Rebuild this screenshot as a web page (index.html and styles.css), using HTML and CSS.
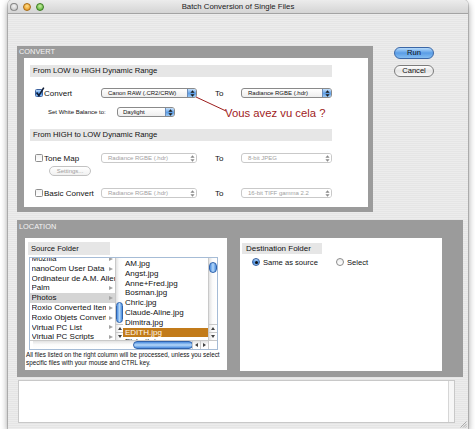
FILE: index.html
```html
<!DOCTYPE html>
<html>
<head>
<meta charset="utf-8">
<title>Batch Conversion of Single Files</title>
<link rel="stylesheet" href="styles.css">
</head>
<body>
<div class="window">
  <div class="titlebar">
    <div class="lights"><span class="light close"></span><span class="light minimize"></span><span class="light zoom"></span></div>
    <div class="title">Batch Conversion of Single Files</div>
    <div></div>
  </div>
  <div class="content">
    <div class="top-row">
      <section class="panel convert">
        <div class="panel-head">CONVERT</div>
        <div class="panel-body">
          <div class="band">From LOW to HIGH Dynamic Range</div>
          <div class="row r-convert">
            <label class="check"><span class="box checked"><svg width="10" height="11" viewBox="0 0 10 11"><path d="M1.6 5.6 L3.9 8.6 L8.8 0.6" fill="none" stroke="#0d1a33" stroke-width="1.6"/></svg></span>Convert</label>
            <div class="popup"><span>Canon RAW (.CR2/CRW)</span><span class="cap"><svg width="5" height="7" viewBox="0 0 5 7"><path d="M2.5 0.3 L4.6 2.8 H0.4Z M2.5 6.7 L4.6 4.2 H0.4Z" fill="#1a1a1a"/></svg></span></div>
            <span class="to">To</span>
            <div class="popup right"><span>Radiance RGBE (.hdr)</span><span class="cap"><svg width="5" height="7" viewBox="0 0 5 7"><path d="M2.5 0.3 L4.6 2.8 H0.4Z M2.5 6.7 L4.6 4.2 H0.4Z" fill="#1a1a1a"/></svg></span></div>
          </div>
          <div class="row r-wb">
            <span class="wb-label">Set White Balance to:</span>
            <div class="popup wb"><span>Daylight</span><span class="cap"><svg width="5" height="7" viewBox="0 0 5 7"><path d="M2.5 0.3 L4.6 2.8 H0.4Z M2.5 6.7 L4.6 4.2 H0.4Z" fill="#1a1a1a"/></svg></span></div>
          </div>
          <div class="band band2">From HIGH to LOW Dynamic Range</div>
          <div class="row r-tone">
            <label class="check"><span class="box"></span>Tone Map</label>
            <div class="popup off"><span>Radiance RGBE (.hdr)</span><span class="cap"><svg width="5" height="7" viewBox="0 0 5 7"><path d="M2.5 0.3 L4.6 2.8 H0.4Z M2.5 6.7 L4.6 4.2 H0.4Z" fill="#8a8a8a"/></svg></span></div>
            <span class="to">To</span>
            <div class="popup right off"><span>8-bit JPEG</span><span class="cap"><svg width="5" height="7" viewBox="0 0 5 7"><path d="M2.5 0.3 L4.6 2.8 H0.4Z M2.5 6.7 L4.6 4.2 H0.4Z" fill="#8a8a8a"/></svg></span></div>
          </div>
          <div class="row r-settings"><span class="btn-small">Settings...</span></div>
          <div class="row r-basic">
            <label class="check"><span class="box"></span>Basic Convert</label>
            <div class="popup off"><span>Radiance RGBE (.hdr)</span><span class="cap"><svg width="5" height="7" viewBox="0 0 5 7"><path d="M2.5 0.3 L4.6 2.8 H0.4Z M2.5 6.7 L4.6 4.2 H0.4Z" fill="#8a8a8a"/></svg></span></div>
            <span class="to">To</span>
            <div class="popup right off"><span>16-bit TIFF gamma 2.2</span><span class="cap"><svg width="5" height="7" viewBox="0 0 5 7"><path d="M2.5 0.3 L4.6 2.8 H0.4Z M2.5 6.7 L4.6 4.2 H0.4Z" fill="#8a8a8a"/></svg></span></div>
          </div>
          <svg class="note-line" width="40" height="20" viewBox="0 0 40 20"><path d="M1 1 L31 15" stroke="#9c1d1d" stroke-width="1"/></svg>
          <span class="note-text">Vous avez vu cela ?</span>
        </div>
      </section>
      <div class="actions">
        <button class="aqua default">Run</button>
        <button class="aqua">Cancel</button>
      </div>
    </div>

    <section class="panel location">
      <div class="panel-head">LOCATION</div>
      <div class="loc-body">
        <div class="source">
          <div class="band sband">Source Folder</div>
          <div class="browser">
            <div class="cols">
              <div class="col c1">
                <div class="list">
                  <div class="item"><span class="name">Mozilla</span><span class="arr"></span></div>
                  <div class="item"><span class="name">nanoCom User Data</span><span class="arr"></span></div>
                  <div class="item"><span class="name">Ordinateur de A.M. Allemand</span></div>
                  <div class="item"><span class="name">Palm</span><span class="arr"></span></div>
                  <div class="item sel-gray"><span class="name">Photos</span><span class="arr"></span></div>
                  <div class="item"><span class="name">Roxio Converted Items</span><span class="arr"></span></div>
                  <div class="item"><span class="name">Roxio Objets Convertis</span><span class="arr"></span></div>
                  <div class="item"><span class="name">Virtual PC List</span><span class="arr"></span></div>
                  <div class="item"><span class="name">Virtual PC Scripts</span><span class="arr"></span></div>
                </div>
              </div>
              <div class="vscroll s1">
                <div class="track"><div class="thumb"></div></div>
                <div class="sarrow up"></div>
                <div class="sarrow down"></div>
              </div>
              <div class="col c2">
                <div class="list">
                  <div class="item">AM.jpg</div>
                  <div class="item">Angst.jpg</div>
                  <div class="item">Anne+Fred.jpg</div>
                  <div class="item">Bosman.jpg</div>
                  <div class="item">Chric.jpg</div>
                  <div class="item">Claude-Aline.jpg</div>
                  <div class="item">Dimitra.jpg</div>
                  <div class="item sel-orange">EDITH.jpg</div>
                  <div class="item">Elsbeth.jpg</div>
                </div>
              </div>
              <div class="vscroll s2">
                <div class="track"><div class="thumb"></div></div>
                <div class="sarrow up"></div>
                <div class="sarrow down"></div>
              </div>
            </div>
            <div class="hscroll">
              <div class="htrack"><div class="hthumb"></div></div>
              <div class="harrow left"></div>
              <div class="harrow right"></div>
              <div class="corner"></div>
            </div>
          </div>
          <p class="help">All files listed on the right column will be processed, unless you select<br>specific files with your mouse and CTRL key.</p>
        </div>
        <div class="dest">
          <div class="band dband">Destination Folder</div>
          <div class="radios">
            <label class="radio-item"><span class="radio on"></span>Same as source</label>
            <label class="radio-item"><span class="radio"></span>Select</label>
          </div>
        </div>
      </div>
    </section>

    <div class="log"><div class="log-track"></div></div>
  </div>
  <svg class="grip" width="8" height="8" viewBox="0 0 8 8"><path d="M7.5 1.5 L1.5 7.5 M7.5 4 L4 7.5 M7.5 6.3 L6.3 7.5" stroke="#9a9a9a" stroke-width=".8"/></svg>
</div>
</body>
</html>
```

FILE: styles.css
```css
* { box-sizing: border-box; margin: 0; padding: 0; }

body {
  background: #fff;
  font-family: "Liberation Sans", Arial, sans-serif;
  font-size: 8px;
  color: #111;
}

.window {
  position: relative;
  margin-left: 8px;
  width: 460px;
  height: 429px;
  border-radius: 5px 5px 0 0;
  background: repeating-linear-gradient(to bottom, #ececec 0 1px, #e5e5e5 1px 2px);
  box-shadow: 0 0 0 1px rgba(0,0,0,.16), 0 3px 7px rgba(0,0,0,.45);
}

.titlebar {
  display: grid;
  grid-template-columns: 1fr auto 1fr;
  align-items: center;
  height: 14px;
  border-bottom: 1px solid #a3a3a3;
  border-radius: 5px 5px 0 0;
  background: linear-gradient(#ececec, #d4d4d4);
}

.lights { display: flex; gap: 5px; padding-left: 2px; }
.light {
  width: 8px; height: 8px; border-radius: 50%;
  border: 1px solid rgba(0,0,0,.35);
}
.close { background: radial-gradient(circle at 50% 35%, #f4f4f4, #bdbdbd); }
.minimize { background: radial-gradient(circle at 50% 35%, #ffe08a, #e58a10); border-color: #a86a10; }
.zoom { background: radial-gradient(circle at 50% 35%, #c8f0a0, #4aa82a); border-color: #3a7a20; }

.title { font-size: 7.8px; color: #1a1a1a; }

.content { padding: 32px 0 0 9px; }

.top-row { display: flex; align-items: flex-start; }

.panel { background: #9b9b9b; }
.panel-head {
  height: 12px; line-height: 12px;
  padding-left: 2px;
  color: #f4f4f4;
  font-size: 7.4px;
}

.convert { width: 356px; height: 166px; display: flex; flex-direction: column; }
.convert .panel-body {
  position: relative;
  flex: 1;
  margin: 0 5px 5px 7px;
  background: #fff;
}

.band {
  margin: 7px 0 0 6px;
  width: 302px;
  height: 12px;
  line-height: 12px;
  padding-left: 3px;
  background: #e6e6e6;
  font-size: 7.7px;
  color: #111;
}
.band2 { margin-top: 12px; }

.row { display: flex; align-items: center; height: 10px; padding-left: 11px; }
.r-convert { margin-top: 11px; }
.r-wb { margin-top: 9px; padding-left: 24px; }
.r-tone { margin-top: 12px; }
.r-settings { margin-top: 3px; padding-left: 25px; }
.r-basic { margin-top: 12px; }

.check { width: 66px; display: flex; align-items: center; gap: 1px; font-size: 8px; white-space: nowrap; }
.box {
  position: relative;
  width: 8px; height: 8px;
  border: 1px solid #8e8e8e;
  border-radius: 1.5px;
  background: linear-gradient(#f2f2f2, #fff);
  flex: none;
}
.box.checked {
  border-color: #3e64a0;
  background: linear-gradient(#bcdcfb, #4b8ee0 55%, #8cc0f4);
}
.box svg { position: absolute; left: -1px; top: -3px; }

.popup {
  width: 96px; height: 10px;
  display: flex; justify-content: space-between; align-items: stretch;
  border: 1px solid #8a8a8a;
  border-radius: 3px;
  background: linear-gradient(#fff, #eeeeee);
  font-size: 6px; line-height: 8px;
  padding-left: 6px;
  white-space: nowrap;
  overflow: hidden;
}
.popup.right { width: 91px; }
.popup.wb { width: 58px; padding-left: 5px; }
.cap {
  width: 9px; flex: none;
  display: flex; align-items: center; justify-content: center;
  border-left: 1px solid #6c8cb8;
  background: linear-gradient(#c6e0fa, #5f9fe6 55%, #9cc9f3);
}
.popup.off { border-color: #c9c9c9; color: #a2a2a2; background: #fff; }
.popup.off .cap { background: #fff; border-left-color: #fff; }

.to { margin-left: 18px; width: 26px; font-size: 8px; }

.wb-label { width: 69px; font-size: 6px; white-space: nowrap; }

.btn-small {
  width: 42px; height: 10px;
  border: 1px solid #c2c2c2;
  border-radius: 5px;
  background: linear-gradient(#fff, #f1f1f1);
  color: #a0a0a0;
  font-size: 6px; line-height: 8px;
  text-align: center;
}

.note-line { position: absolute; left: 171px; top: 38px; }
.note-text {
  position: absolute; left: 201px; top: 50px;
  font-size: 11.3px; line-height: 11px;
  color: #a01b1b;
  white-space: nowrap;
}

.actions { margin-left: 21px; padding-top: 1px; display: flex; flex-direction: column; gap: 6px; }
.aqua {
  width: 40px; height: 12px;
  border: 1px solid #7c7c7c;
  border-radius: 6px;
  background: linear-gradient(#ffffff, #e4e4e4 50%, #f8f8f8);
  font-family: "Liberation Sans", Arial, sans-serif;
  font-size: 7.6px; line-height: 10px;
  color: #111;
}
.aqua.default {
  border-color: #3a66a6;
  background: linear-gradient(#b7dbfb, #5a9de6 50%, #84bdf1);
}

.location { width: 446px; height: 157px; margin-top: 8px; }
.location .panel-head { height: 14px; line-height: 14px; }
.loc-body { display: flex; gap: 13px; padding: 4px 0 0 8px; }
.source { width: 202px; height: 132px; background: #fff; }
.dest { width: 202px; height: 133px; background: #fff; }

.sband { margin: 4px 0 0 3px; width: 82px; height: 13px; line-height: 13px; font-size: 7.6px; }
.dband { margin: 5px 0 0 2px; width: 80px; height: 11px; line-height: 11px; padding-left: 4px; font-size: 8px; }

.browser {
  margin: 2px 0 0 4px;
  width: 189px; height: 93px;
  border: 1px solid #a6bcd6;
  display: flex; flex-direction: column;
}
.cols { display: flex; height: 82px; }
.col { width: 85px; overflow: hidden; flex: none; }
.c1 .list { margin-top: -4px; }
.c2 .list { padding-top: 1px; }
.item {
  height: 9.8px; line-height: 9.8px;
  font-size: 8px;
  white-space: nowrap;
  display: flex;
  overflow: hidden;
}
.c1 .item { padding-left: 1.5px; }
.c2 .item { padding-left: 2px; }
.name { flex: 1; min-width: 0; overflow: hidden; }
.arr {
  width: 9px; flex: none;
  display: flex; align-items: center; justify-content: center;
}
.arr::after {
  content: "";
  border-left: 4px solid #a3a3a3;
  border-top: 2.5px solid transparent;
  border-bottom: 2.5px solid transparent;
}
.sel-gray { background: #d5d5d5; }
.sel-orange { background: #c27b1a; color: #fff8ec; }

.vscroll {
  width: 8px; flex: none;
  border-left: 1px solid #c9c9c9;
  display: flex; flex-direction: column;
  background: linear-gradient(to right, #e2e2e2, #fbfbfb 45%, #fff);
}
.s2 { width: 9px; }
.track { flex: 1; position: relative; }
.thumb {
  border: 1px solid #2f63ad;
  border-radius: 4px;
  background: linear-gradient(to right, #4b8ddf, #b4d8fa 50%, #4b8ddf);
}
.s1 .thumb { margin-top: 44px; height: 21px; }
.s2 .thumb { margin-top: 4px; height: 11px; }
.sarrow {
  height: 8px;
  border-top: 1px solid #c9c9c9;
  display: flex; align-items: center; justify-content: center;
}
.sarrow.up::after {
  content: ""; border-bottom: 3.5px solid #444;
  border-left: 2.5px solid transparent; border-right: 2.5px solid transparent;
}
.sarrow.down::after {
  content: ""; border-top: 3.5px solid #444;
  border-left: 2.5px solid transparent; border-right: 2.5px solid transparent;
}

.hscroll {
  height: 9px;
  border-top: 1px solid #c9c9c9;
  display: flex;
  background: linear-gradient(#e2e2e2, #fbfbfb 45%, #fff);
}
.htrack { width: 162px; padding-left: 100px; border-left: 3px solid #fff; }
.hthumb {
  width: 60px; height: 8px;
  border: 1px solid #2f63ad;
  border-radius: 4px;
  background: linear-gradient(#4b8ddf, #b4d8fa 50%, #4b8ddf);
}
.harrow {
  width: 8px;
  border-left: 1px solid #c9c9c9;
  display: flex; align-items: center; justify-content: center;
}
.harrow.left::after {
  content: ""; border-right: 3.5px solid #444;
  border-top: 2.5px solid transparent; border-bottom: 2.5px solid transparent;
}
.harrow.right::after {
  content: ""; border-left: 3.5px solid #444;
  border-top: 2.5px solid transparent; border-bottom: 2.5px solid transparent;
}
.corner { flex: 1; border-left: 1px solid #c9c9c9; background: #fff; }

.help { margin: 1px 0 0 1px; font-size: 6.3px; line-height: 8px; color: #111; white-space: nowrap; }

.radios { display: flex; align-items: center; height: 8px; margin-top: 4px; padding-left: 12px; }
.radio-item { width: 84px; display: flex; align-items: center; gap: 3px; font-size: 7.6px; white-space: nowrap; }
.radio {
  width: 8px; height: 8px; border-radius: 50%;
  border: 1px solid #8a8a8a;
  background: linear-gradient(#eee, #fff);
  flex: none;
  display: flex; align-items: center; justify-content: center;
}
.radio.on {
  border-color: #345d9c;
  background: linear-gradient(#b9dbfb, #4a8de0 55%, #8ec2f4);
}
.radio.on::after { content: ""; width: 3px; height: 3px; border-radius: 50%; background: #111; }

.log {
  margin: 3px 0 0 1px;
  width: 437px; height: 43px;
  background: #fff;
  border: 1px solid #c8c8c8;
  display: flex; justify-content: flex-end;
}
.log-track { width: 6px; border-left: 1px solid #d6d6d6; background: #f6f6f6; }

.grip { position: absolute; right: 1px; bottom: 1px; }
```
